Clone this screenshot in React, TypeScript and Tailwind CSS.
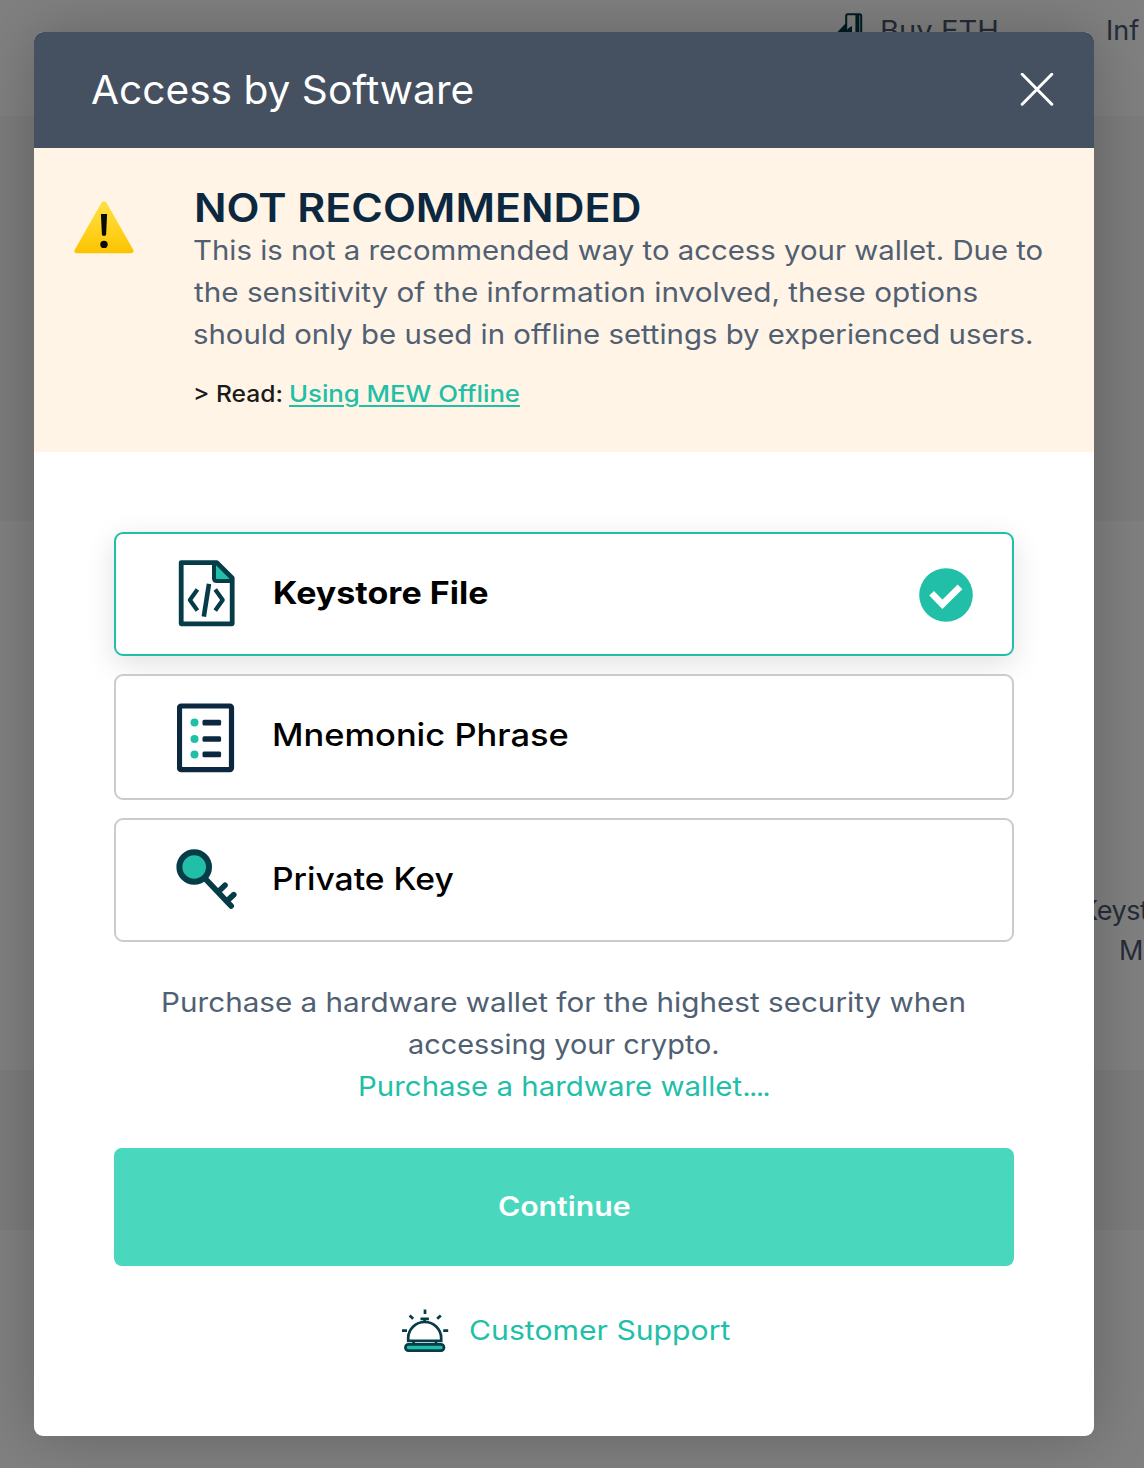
import type { ReactNode } from "react";

function Wide({ className, children }: { className: string; children: ReactNode }) {
  return <span className={`inline-block whitespace-nowrap ${className}`}>{children}</span>;
}

function WarningIcon() {
  return (
    <svg className="mt-[13px] h-[54px] w-[60px]" viewBox="0 0 60 54">
      <defs>
        <linearGradient id="warn" x1="0" y1="0" x2="0" y2="1">
          <stop offset="0" stopColor="#ffdf43" />
          <stop offset="0.55" stopColor="#ffd21f" />
          <stop offset="1" stopColor="#fcc200" />
        </linearGradient>
      </defs>
      <path d="M27.6 1.6Q30 -1.2 32.4 1.6L59.2 48.8Q60.4 52.2 57 52.3H3Q-.4 52.2.8 48.8Z" fill="url(#warn)" />
      <path d="M26.9 13h6.2l-1 20.6q-.1 1.4-2.1 1.4t-2.1-1.4z" fill="#0a0a0a" />
      <circle cx="30" cy="43.4" r="3.7" fill="#0a0a0a" />
    </svg>
  );
}

function KeystoreIcon() {
  return (
    <svg className="ml-[1.5px] h-[68px] w-[58px]" viewBox="0 0 58 68" fill="none" stroke="#053c48" strokeWidth="4.8" strokeLinejoin="round">
      <path d="M37.5 3.2 55 20.8H37.5Z" fill="#22bfa8" stroke="none" />
      <path d="M3.2 2.6h35.6L54.2 18V63.8H3.2Z" />
      <path d="M36 3v15.3q0 2.8 2.8 2.8H54" strokeWidth="4" />
      <path d="M19.4 29.6 11.9 40l7.5 10.5M37.2 29.6 44.7 40l-7.5 10.5" strokeWidth="4.2" />
      <path d="M31 23.8 25.8 56.6" strokeWidth="4.6" />
    </svg>
  );
}

function MnemonicIcon() {
  return (
    <svg className="mt-[2px] ml-[1px] h-[70px] w-[58px]" viewBox="0 0 58 70" fill="none">
      <rect x="2.5" y="3" width="52" height="63.6" rx="1.6" stroke="#0b2840" strokeWidth="5.2" />
      {[19.6, 36, 51.4].map((y) => (
        <g key={y}>
          <circle cx="17.5" cy={y} r="4" fill="#22bfa8" />
          <rect x="25.5" y={y - 2.8} width="18.6" height="5.6" rx="1.5" fill="#0b2840" />
        </g>
      ))}
    </svg>
  );
}

function KeyIcon() {
  return (
    <svg className="h-[62px] w-[62px]" viewBox="0 0 62 62" fill="none" stroke="#053c48" strokeLinecap="round">
      <path d="M30 30.5 55.2 57M42 43l7-6.8M50.6 52.4l7.2-6.8" strokeWidth="5.6" />
      <circle cx="18.2" cy="18" r="14.8" fill="#22bfa8" strokeWidth="6" />
    </svg>
  );
}

function BellIcon() {
  return (
    <svg className="h-[44px] w-[48px]" viewBox="0 0 48 44" fill="none" stroke="#053c48" strokeWidth="2.7">
      <path d="M7.2 31.8V29a16.5 16 0 0 1 33 0v2.8Z" />
      <path d="M23.6 13V10M19.5 9.8h8.4M12.6 32v3.2M35 32v3.2" />
      <rect x="4.4" y="35.4" width="38.6" height="6.2" rx="3" fill="#22bfa8" />
      <path d="M24 .5v4.6M8.6 6.4l3.6 3.4M39.8 6.4l-3.6 3.4M1 21.6h5M42.2 21.6h5" />
    </svg>
  );
}

function CheckIcon() {
  return (
    <svg className="mt-[1px] h-[54px] w-[54px]" viewBox="0 0 54 54">
      <circle cx="27" cy="27" r="26.8" fill="#22bfa8" />
      <path d="M12.6 25.3 23.4 36.4 41 18.8" fill="none" stroke="#fff" strokeWidth="6.6" />
    </svg>
  );
}

function Backdrop() {
  return (
    <div className="col-start-1 row-start-1 flex flex-col overflow-hidden text-[27px] text-[#252c38]">
      <div className="flex h-[116px] items-start bg-[#808080] pt-[9px] pl-[837px]">
        <svg className="mt-[2px] h-[30px] w-[28px]" viewBox="0 0 28 30" fill="none">
          <path d="M0 21.5 9 12v8q3-4 6-5v14H0Z" fill="#021d22" />
          <rect x="9.2" y="3.2" width="15" height="26" rx="1.6" stroke="#021d22" strokeWidth="2" />
          <path d="M20.4 3v26" stroke="#021d22" strokeWidth="4" />
        </svg>
        <Wide className="ml-[15px] w-[226px] leading-[44px]"><Wide className="origin-left scale-x-[1.08]">Buy ETH</Wide></Wide>
        <Wide className="leading-[44px]">Inf</Wide>
      </div>
      <div className="h-[405px] bg-[#7c7c7c]" />
      <div className="h-[549px] bg-[#808080] pt-[370px] pl-[1080px] leading-[40px]">
        <Wide className="tracking-[-0.4px]">Keyst</Wide>
        <div className="pl-[39px]">M</div>
      </div>
      <div className="h-[160px] bg-[#7c7c7c]" />
      <div className="h-[238px] bg-[#808080]" />
    </div>
  );
}

function Option({ icon, label, selected = false, className }: { icon: ReactNode; label: ReactNode; selected?: boolean; className: string }) {
  return (
    <div className={`flex items-center rounded-[9px] border-2 bg-white pr-[39px] pl-[60px] text-[31px] text-black ${className}`}>
      <div className="flex w-[96px] shrink-0">{icon}</div>
      <div className="grow pb-[3px] leading-[48px]">{label}</div>
      {selected && <CheckIcon />}
    </div>
  );
}

export default function App() {
  return (
    <div className="grid h-[1468px] w-[1144px] overflow-hidden font-['Inter',sans-serif]">
      <Backdrop />
      <div className="relative col-start-1 row-start-1 mt-[32px] ml-[34px] flex h-[1404px] w-[1060px] flex-col overflow-hidden rounded-[9px] bg-white shadow-[0_0_60px_rgba(0,0,0,0.23)]">
        <header className="flex h-[116px] items-center justify-between bg-[#455061] pr-[40px] pl-[57px] text-white">
          <h1 className="text-[39px] leading-[60px]"><Wide className="origin-left scale-x-[1.042]">Access by Software</Wide></h1>
          <svg className="h-[34px] w-[34px]" viewBox="0 0 34 34" fill="none" stroke="#fff" strokeWidth="3" strokeLinecap="round">
            <path d="M2.2 1.2 31.8 31.2M31.8 1.2 2.2 31.2" />
          </svg>
        </header>
        <section className="flex h-[304px] bg-[#fff4e5] pt-[40px] pl-[40px]">
          <WarningIcon />
          <div className="ml-[59px] text-[27px] leading-[42px] text-[#506073]">
            <h2 className="h-[42px] pl-[1px] text-[39px] leading-[40px] font-semibold text-[#0b2840]"><Wide className="origin-left scale-x-[1.1]">NOT RECOMMENDED</Wide></h2>
            <div className="flex flex-col items-start">
              <Wide className="origin-left scale-x-[1.087]">This is not a recommended way to access your wallet. Due to</Wide>
              <Wide className="ml-[1px] origin-left scale-x-[1.1]">the sensitivity of the information involved, these options</Wide>
              <Wide className="origin-left scale-x-[1.087]">should only be used in offline settings by experienced users.</Wide>
            </div>
            <div className="mt-[20px] flex text-[23px] leading-[36px] font-medium">
              <Wide className="w-[96px] text-[#1a1a1a]"><Wide className="origin-left scale-x-[1.07]">&gt; Read:</Wide></Wide>
              <a className="inline-block origin-left scale-x-[1.118] whitespace-nowrap text-[#22bfa8] underline decoration-2 underline-offset-[3px]">Using MEW Offline</a>
            </div>
          </div>
        </section>
        <main className="flex flex-col px-[80px] pt-[80px]">
          <div className="flex flex-col gap-[18px]">
            <Option selected className="h-[124px] border-[#22bfa8] shadow-[0_8px_30px_rgba(0,0,0,0.12)]" icon={<KeystoreIcon />} label={<Wide className="ml-[1px] origin-left scale-x-[1.098] font-bold">Keystore File</Wide>} />
            <Option className="h-[126px] border-[#cbcbcb]" icon={<MnemonicIcon />} label={<Wide className="-mt-[1px] mb-[1px] origin-left scale-x-[1.112] font-medium">Mnemonic Phrase</Wide>} />
            <Option className="h-[124px] border-[#cbcbcb]" icon={<KeyIcon />} label={<Wide className="origin-left scale-x-[1.085] font-medium">Private Key</Wide>} />
          </div>
          <div className="mt-[40px] flex flex-col items-center text-[27px] leading-[42px] text-[#506073]">
            <Wide className="scale-x-[1.098]">Purchase a hardware wallet for the highest security when</Wide>
            <Wide className="scale-x-[1.068]">accessing your crypto.</Wide>
            <Wide className="scale-x-[1.09] text-[#22bfa8]">Purchase a hardware wallet<span className="tracking-[-1.6px]">....</span></Wide>
          </div>
          <button className="mt-[40px] h-[118px] rounded-[8px] bg-[#49d7bd] text-[27px] font-semibold text-white"><Wide className="scale-x-[1.12]">Continue</Wide></button>
          <div className="mt-[43px] ml-[287px] flex items-start">
            <BellIcon />
            <Wide className="mt-[1px] ml-[20px] origin-left scale-x-[1.118] text-[27px] leading-[42px] text-[#22bfa8]">Customer Support</Wide>
          </div>
        </main>
      </div>
    </div>
  );
}
